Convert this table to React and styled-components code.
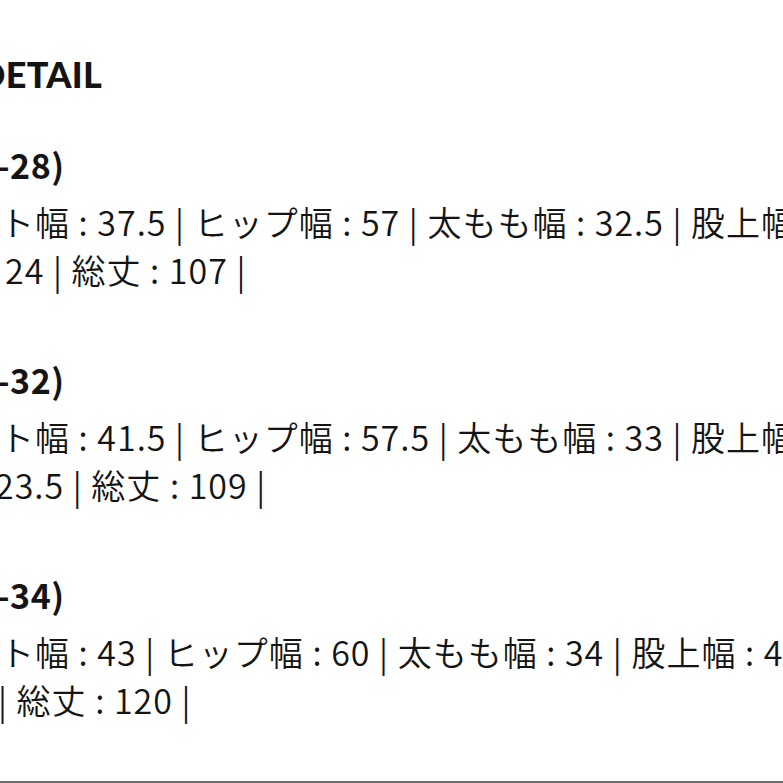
import React from "react";
import styled, { createGlobalStyle } from "styled-components";

const Global = createGlobalStyle`
  html, body { margin: 0; padding: 0; background: #fff; }
  body { font-family: "Noto Sans CJK JP", "Noto Sans", sans-serif; color: #141414; }
`;

const Page = styled.div`
  width: 783px;
  height: 783px;
  box-sizing: border-box;
  overflow: hidden;
  padding-top: 49px;
  border-bottom: 2px solid #6b6b6b;
  background: #fff;
`;

const Column = styled.div`
  display: flex;
  flex-direction: column;
`;

const Line = styled.div`
  font-size: 34px;
  line-height: 48px;
  white-space: nowrap;
  letter-spacing: 1px;
  font-weight: ${(p) => (p.$bold ? 700 : 350)};
  margin-left: ${(p) => -p.$cut}px;
`;

const Title = styled(Line)`
  font-family: "Lato", "Liberation Sans", Arial, sans-serif;
  font-size: 36px;
  font-weight: 900;
  letter-spacing: 0.3px;
  padding-top: 1px;
  margin-bottom: 43px;
`;

const Section = styled.section`
  display: flex;
  flex-direction: column;
  margin-bottom: 62px;
`;

const Heading = styled(Line)`
  letter-spacing: 0.5px;
  margin-bottom: 9px;
`;

const sections = [
  {
    head: "-28)",
    headCut: 3,
    lines: [
      { text: "ト幅 : 37.5 | ヒップ幅 : 57 | 太もも幅 : 32.5 | 股上幅 : 30", cut: 0 },
      { text: "24 | 総丈 : 107 |", cut: -5 },
    ],
  },
  {
    head: "-32)",
    headCut: 3,
    lines: [
      { text: "ト幅 : 41.5 | ヒップ幅 : 57.5 | 太もも幅 : 33 | 股上幅 : 31", cut: 0 },
      { text: "23.5 | 総丈 : 109 |", cut: 5 },
    ],
  },
  {
    head: "-34)",
    headCut: 3,
    lines: [
      { text: "ト幅 : 43 | ヒップ幅 : 60 | 太もも幅 : 34 | 股上幅 : 41", cut: 0 },
      { text: "| 総丈 : 120 |", cut: 2 },
    ],
  },
];

export default function App() {
  return (
    <>
      <Global />
      <Page>
        <Column>
          <Title $cut={22}>DETAIL</Title>
          {sections.map((s, i) => (
            <Section key={i}>
              <Heading $bold $cut={s.headCut}>{s.head}</Heading>
              {s.lines.map((l, j) => (
                <Line key={j} $cut={l.cut}>{l.text}</Line>
              ))}
            </Section>
          ))}
        </Column>
      </Page>
    </>
  );
}
